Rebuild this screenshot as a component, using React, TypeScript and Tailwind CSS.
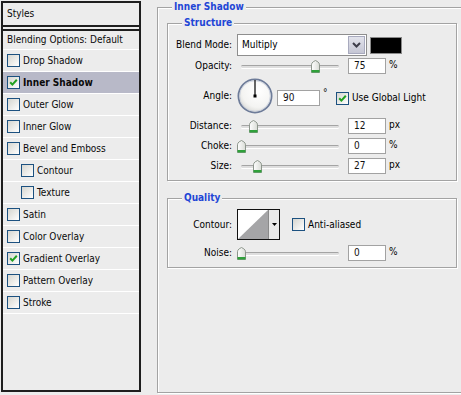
import React from "react";

type Row = { label: string; checked?: boolean; selected?: boolean; indent?: boolean };

const rows: Row[] = [
  { label: "Drop Shadow" },
  { label: "Inner Shadow", checked: true, selected: true },
  { label: "Outer Glow" },
  { label: "Inner Glow" },
  { label: "Bevel and Emboss" },
  { label: "Contour", indent: true },
  { label: "Texture", indent: true },
  { label: "Satin" },
  { label: "Color Overlay" },
  { label: "Gradient Overlay", checked: true },
  { label: "Pattern Overlay" },
  { label: "Stroke" },
];

function Check({ checked }: { checked?: boolean }) {
  return (
    <span className="relative inline-flex w-[13px] h-[13px] shrink-0 border border-[#1c5180] bg-linear-to-br from-[#d6d6d0] to-white">
      {checked && (
        <svg viewBox="0 0 11 11" className="absolute left-0 top-0 w-[11px] h-[11px]">
          <path d="M2.2 5.2 L4.4 7.6 L8.8 2.8" stroke="#21a121" strokeWidth="2" fill="none" />
        </svg>
      )}
    </span>
  );
}

function Thumb() {
  return (
    <svg width="9" height="13" viewBox="0 0 9 13">
      <defs>
        <linearGradient id="tg" x1="0" y1="0" x2="1" y2="0">
          <stop offset="0" stopColor="#ffffff" />
          <stop offset="1" stopColor="#d9dcd6" />
        </linearGradient>
      </defs>
      <path d="M0.5 12.5 V4.8 Q0.5 3 2.2 1.8 L4.5 0.5 L6.8 1.8 Q8.5 3 8.5 4.8 V12.5 Z" fill="url(#tg)" stroke="#8d968c" />
      <rect x="0.5" y="10" width="8" height="2.5" fill="#2fa03a" />
    </svg>
  );
}

function Slider({ thumb }: { thumb: string }) {
  return (
    <div className="relative w-[106px] h-[16px] flex items-center px-[4px] shrink-0">
      <div className="flex-1 h-[3px] rounded-full bg-[#dedede] border-t border-[#a4a4a4] shadow-[0_1px_0_#ffffff]" />
      <span className={`absolute top-[2px] flex ${thumb}`}>
        <Thumb />
      </span>
    </div>
  );
}

function NumBox({ value, w = "w-[38px]" }: { value: string; w?: string }) {
  return (
    <div className={`${w} h-[16px] shrink-0 border border-[#a2a2a2] bg-white flex items-center pl-[5px] text-[#111] leading-none`}>
      {value}
    </div>
  );
}

function Label({ children }: { children: React.ReactNode }) {
  return <div className="w-[65px] shrink-0 text-right pr-[1px] text-black leading-none">{children}</div>;
}

function SliderRow({ label, thumb, value, unit, mt }: { label: string; thumb: string; value: string; unit: string; mt: string }) {
  return (
    <div className={`flex items-center h-[16px] ${mt}`}>
      <Label>{label}</Label>
      <div className="w-[4px] shrink-0" />
      <Slider thumb={thumb} />
      <div className="w-[5px] shrink-0" />
      <NumBox value={value} />
      <span className="ml-[3px] leading-none text-black -mt-[3px]">{unit}</span>
    </div>
  );
}

function Group({ title, className, children }: { title: string; className: string; children?: React.ReactNode }) {
  return (
    <div className={`relative border border-[#a3a3a3] shadow-[inset_1px_1px_0_#ffffff,1px_1px_0_#ffffff] ${className}`}>
      <span className="absolute left-[14px] top-[-7px] px-[2px] bg-[#ececec] text-[#1f46d6] font-bold leading-[12px]">
        {title}
      </span>
      {children}
    </div>
  );
}

function AngleDial() {
  return (
    <svg width="36" height="36" viewBox="0 0 36 36" className="shrink-0">
      <defs>
        <radialGradient id="dg" cx="0.6" cy="0.35" r="0.7">
          <stop offset="0" stopColor="#ffffff" />
          <stop offset="0.7" stopColor="#f4f4f2" />
          <stop offset="1" stopColor="#d8d8d4" />
        </radialGradient>
      </defs>
      <circle cx="18" cy="18" r="16.6" fill="url(#dg)" stroke="#6e7c99" strokeWidth="1.8" />
      <circle cx="18" cy="18" r="15.3" fill="none" stroke="#c9cfdc" strokeWidth="0.8" />
      <line x1="18" y1="18" x2="18" y2="2" stroke="#000" strokeWidth="1.2" />
      <rect x="16.5" y="16.5" width="3" height="3" fill="#000" />
    </svg>
  );
}

export default function App() {
  return (
    <div className="w-[461px] h-[395px] bg-[#ececec] flex items-start overflow-hidden text-[10px] font-['DejaVu_Sans_Condensed','DejaVu_Sans',sans-serif] font-stretch-condensed">
      {/* Left panel */}
      <div className="ml-[1px] mt-[1px] w-[140px] h-[391px] shrink-0 border-2 border-[#1e1e1e] flex flex-col bg-[#ececec] text-[#0a0a0a]">
        <div className="h-[24px] shrink-0 flex items-center pl-[4px] border-b-2 border-[#1e1e1e] leading-none">Styles</div>
        <div className="h-[2px] shrink-0" />
        <div className="h-[21px] shrink-0 border-t-2 border-[#1e1e1e] border-b border-b-white flex items-center pl-[4px] leading-none">
          Blending Options: Default
        </div>
        {rows.map((r) => (
          <div
            key={r.label}
            className={`h-[22px] shrink-0 border-b border-white flex items-center gap-[3px] leading-none ${r.indent ? "pl-[18px]" : "pl-[4px]"} ${r.selected ? "bg-[#b8b9c8] font-bold" : ""}`}
          >
            <Check checked={r.checked} />
            <span>{r.label}</span>
          </div>
        ))}
      </div>

      {/* Right area */}
      <div className="ml-[16px] mt-[7px] shrink-0">
        <Group title="Inner Shadow" className="w-[330px] h-[386px] pl-[9px] pt-[15px]">
          <Group title="Structure" className="w-[290px] h-[158px] pt-[10px]">
            {/* Blend Mode */}
            <div className="flex items-center h-[22px]">
              <Label>Blend Mode:</Label>
              <div className="w-[4px] shrink-0" />
              <div className="w-[130px] h-[22px] shrink-0 border border-[#8e8e8e] bg-white flex items-center">
                <span className="flex-1 pl-[4px] leading-none text-black">Multiply</span>
                <div className="w-[17px] h-[18px] mr-[1px] border border-[#a8aabe] bg-linear-to-b from-[#e2e3ec] to-[#c5c6d4] flex items-center justify-center">
                  <svg width="9" height="6" viewBox="0 0 9 6">
                    <path d="M1 1 L4.5 4.5 L8 1" stroke="#3d3d4a" strokeWidth="2" fill="none" />
                  </svg>
                </div>
              </div>
              <div className="ml-[3px] w-[32px] h-[17px] shrink-0 bg-black border border-[#8a8a8a]" />
            </div>

            <SliderRow label="Opacity:" thumb="left-[74px]" value="75" unit="%" mt="mt-[2px]" />

            {/* Angle */}
            <div className="flex items-center h-[36px] mt-[4px]">
              <Label>Angle:</Label>
              <div className="w-[4px] shrink-0" />
              <AngleDial />
              <div className="ml-[4px] mt-[4px] flex items-center">
                <NumBox value="90" w="w-[43px]" />
                <span className="w-[16px] pl-[3px] self-start -mt-[2px] leading-none text-black">°</span>
                <Check checked />
                <span className="ml-[3px] leading-none text-black">Use Global Light</span>
              </div>
            </div>

            <SliderRow label="Distance:" thumb="left-[12px]" value="12" unit="px" mt="mt-[4px]" />
            <SliderRow label="Choke:" thumb="left-[0px]" value="0" unit="%" mt="mt-[4px]" />
            <SliderRow label="Size:" thumb="left-[16px]" value="27" unit="px" mt="mt-[4px]" />
          </Group>

          <Group title="Quality" className="w-[290px] h-[70px] mt-[17px] pt-[10px]">
            <div className="flex items-center h-[31px]">
              <Label>Contour:</Label>
              <div className="w-[4px] shrink-0" />
              <div className="w-[43px] h-[31px] shrink-0 border border-[#111] bg-white flex">
                <svg width="30" height="29" viewBox="0 0 30 29" className="shrink-0">
                  <polygon points="0,29 30,0 30,29" fill="#a5a5a7" />
                </svg>
                <div className="flex-1 border-l border-[#8a8a8a] bg-[#e9e9e9] flex items-center justify-center">
                  <svg width="5" height="3" viewBox="0 0 5 3">
                    <polygon points="0,0 5,0 2.5,3" fill="#000" />
                  </svg>
                </div>
              </div>
              <div className="ml-[12px] flex items-center gap-[3px]">
                <Check />
                <span className="leading-none text-black">Anti-aliased</span>
              </div>
            </div>
            <SliderRow label="Noise:" thumb="left-[0px]" value="0" unit="%" mt="mt-[5px]" />
          </Group>
        </Group>
      </div>
    </div>
  );
}
